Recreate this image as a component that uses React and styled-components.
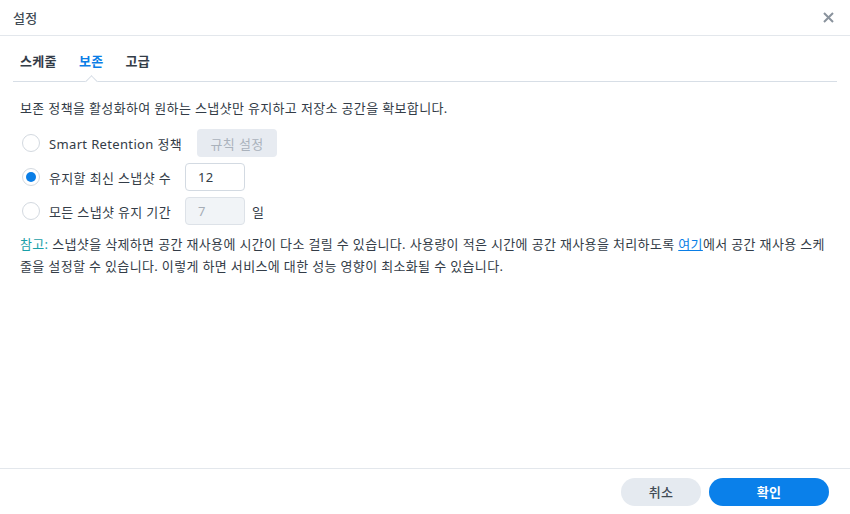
import React, { useState } from "react";
import styled, { createGlobalStyle } from "styled-components";

const GlobalStyle = createGlobalStyle`
  html, body {
    margin: 0;
    padding: 0;
    background: #fff;
  }
  body {
    font-family: "Noto Sans", "Noto Sans CJK KR", sans-serif;
    font-size: 13px;
    letter-spacing: 0.35px;
    color: #333c47;
  }
  * {
    box-sizing: border-box;
  }
`;

const Dialog = styled.div`
  width: 850px;
  height: 514px;
  display: flex;
  flex-direction: column;
  background: #fff;
`;

const Header = styled.div`
  height: 36px;
  flex: none;
  display: flex;
  align-items: center;
  justify-content: space-between;
  padding: 0 14px 0 13px;
  border-bottom: 1px solid #e3e7ec;
`;

const Title = styled.span`
  font-size: 13px;
  font-weight: 500;
  color: #414b55;
`;

const CloseButton = styled.button`
  border: 0;
  background: none;
  padding: 0;
  width: 16px;
  height: 16px;
  display: flex;
  align-items: center;
  justify-content: center;
  cursor: pointer;
`;

const Body = styled.div`
  flex: 1;
  padding: 0 13px;
`;

const Tabs = styled.div`
  display: flex;
  height: 46px;
  padding: 0 0 0 7px;
  border-bottom: 1px solid #d7dee6;
  align-items: center;
`;

const Tab = styled.button`
  position: relative;
  border: 0;
  background: none;
  padding: 4px 0 0;
  margin-right: 22px;
  font-family: inherit;
  font-size: 13px;
  font-weight: 700;
  letter-spacing: inherit;
  color: ${(p) => (p.$active ? "#0a7ee6" : "#333c47")};
  cursor: pointer;
  height: 100%;

  &::after {
    content: "";
    display: ${(p) => (p.$active ? "block" : "none")};
    position: absolute;
    left: 50%;
    bottom: -5px;
    width: 8px;
    height: 8px;
    margin-left: -4px;
    background: #fff;
    border-left: 1px solid #d7dee6;
    border-top: 1px solid #d7dee6;
    transform: rotate(45deg);
  }
`;

const Content = styled.div`
  padding: 15px 7px 0;
`;

const Description = styled.p`
  margin: 0 0 10px;
  line-height: 22px;
`;

const Options = styled.div`
  display: flex;
  flex-direction: column;
  gap: 6px;
`;

const OptionRow = styled.label`
  display: flex;
  align-items: center;
  height: 28px;
  cursor: pointer;
`;

const Radio = styled.span`
  width: 18px;
  height: 18px;
  margin: 0 2px;
  border-radius: 50%;
  border: 1px solid #d3d9e0;
  background: #fff;
  display: flex;
  align-items: center;
  justify-content: center;
  flex: none;

  &::after {
    content: "";
    display: ${(p) => (p.$checked ? "block" : "none")};
    width: 10px;
    height: 10px;
    border-radius: 50%;
    background: #0a7ee6;
  }
`;

const OptionLabel = styled.span`
  margin-left: 7px;
  margin-right: ${(p) => p.$gap}px;
  white-space: nowrap;
`;

const RuleButton = styled.button`
  height: 28px;
  width: 80px;
  border: 0;
  border-radius: 4px;
  background: #e7ebf1;
  color: #aab2bc;
  font-family: inherit;
  font-size: 13px;
  letter-spacing: inherit;
`;

const NumberInput = styled.input`
  width: 60px;
  height: 28px;
  padding: 0 12px;
  border: 1px solid ${(p) => (p.disabled ? "#dde2e8" : "#d3dae2")};
  border-radius: 4px;
  background: ${(p) => (p.disabled ? "#f1f4f7" : "#fff")};
  color: ${(p) => (p.disabled ? "#a6adb6" : "#333c47")};
  font-family: inherit;
  font-size: 13px;
  letter-spacing: inherit;
  outline: none;
`;

const Unit = styled.span`
  margin-left: 7px;
`;

const Note = styled.p`
  margin: 8px 0 0;
  line-height: 22px;
`;

const NoteLabel = styled.span`
  color: #1aa0a8;
`;

const Link = styled.a`
  color: #0a7ee6;
  text-decoration: underline;
`;

const Footer = styled.div`
  height: 46px;
  flex: none;
  border-top: 1px solid #e3e7ec;
  display: flex;
  align-items: center;
  justify-content: flex-end;
  gap: 8px;
  padding: 0 21px 0 0;
`;

const FooterButton = styled.button`
  height: 28px;
  width: ${(p) => (p.$primary ? 120 : 80)}px;
  border: 0;
  border-radius: 14px;
  background: ${(p) => (p.$primary ? "#0a80ea" : "#e5eaf0")};
  color: ${(p) => (p.$primary ? "#fff" : "#414b55")};
  font-family: inherit;
  font-size: 13px;
  letter-spacing: inherit;
  font-weight: ${(p) => (p.$primary ? 700 : 500)};
  cursor: pointer;
`;

const tabs = ["스케줄", "보존", "고급"];

export default function App() {
  const [tab, setTab] = useState(1);
  const [mode, setMode] = useState("count");

  return (
    <>
      <GlobalStyle />
      <Dialog>
        <Header>
          <Title>설정</Title>
          <CloseButton aria-label="닫기">
            <svg width="11" height="11" viewBox="0 0 11 11">
              <path d="M1 1L10 10M10 1L1 10" stroke="#8a939d" strokeWidth="2" />
            </svg>
          </CloseButton>
        </Header>
        <Body>
          <Tabs>
            {tabs.map((t, i) => (
              <Tab key={t} $active={tab === i} onClick={() => setTab(i)}>
                {t}
              </Tab>
            ))}
          </Tabs>
          <Content>
            <Description>
              보존 정책을 활성화하여 원하는 스냅샷만 유지하고 저장소 공간을 확보합니다.
            </Description>
            <Options>
              <OptionRow onClick={() => setMode("smart")}>
                <Radio $checked={mode === "smart"} />
                <OptionLabel $gap={15}>Smart Retention 정책</OptionLabel>
                <RuleButton disabled>규칙 설정</RuleButton>
              </OptionRow>
              <OptionRow onClick={() => setMode("count")}>
                <Radio $checked={mode === "count"} />
                <OptionLabel $gap={14}>유지할 최신 스냅샷 수</OptionLabel>
                <NumberInput defaultValue="12" />
              </OptionRow>
              <OptionRow onClick={() => setMode("days")}>
                <Radio $checked={mode === "days"} />
                <OptionLabel $gap={14}>모든 스냅샷 유지 기간</OptionLabel>
                <NumberInput defaultValue="7" disabled />
                <Unit>일</Unit>
              </OptionRow>
            </Options>
            <Note>
              <NoteLabel>참고:</NoteLabel> 스냅샷을 삭제하면 공간 재사용에 시간이 다소 걸릴 수
              있습니다. 사용량이 적은 시간에 공간 재사용을 처리하도록{" "}
              <Link href="#">여기</Link>에서 공간 재사용 스케줄을 설정할 수 있습니다. 이렇게
              하면 서비스에 대한 성능 영향이 최소화될 수 있습니다.
            </Note>
          </Content>
        </Body>
        <Footer>
          <FooterButton>취소</FooterButton>
          <FooterButton $primary>확인</FooterButton>
        </Footer>
      </Dialog>
    </>
  );
}
